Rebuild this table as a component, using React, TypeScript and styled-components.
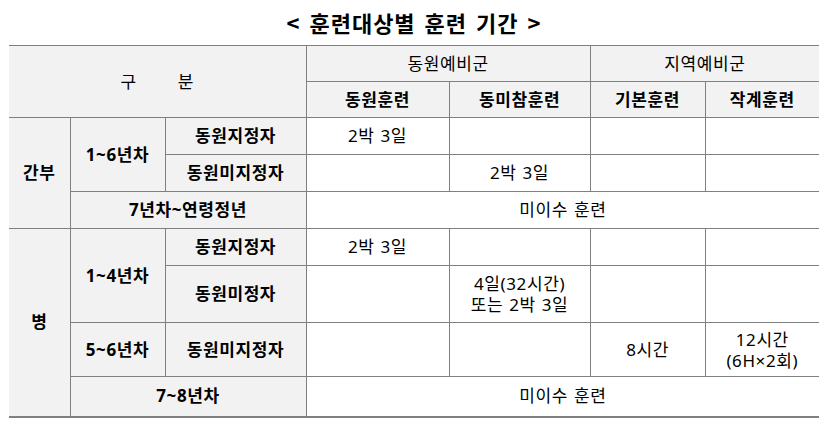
import React from "react";
import styled, { createGlobalStyle } from "styled-components";

const Global = createGlobalStyle`
  html, body { margin: 0; padding: 0; background: #fff; }
  body { font-family: "Noto Sans CJK KR", "Noto Sans", sans-serif; color: #111; }
`;

const Page = styled.div`
  width: 828px;
  padding: 0 9px;
  box-sizing: border-box;
`;

const Title = styled.h1`
  margin: 0;
  height: 45px;
  display: flex;
  align-items: center;
  justify-content: center;
  font-size: 22px;
  font-weight: 700;
  letter-spacing: 1px;
  word-spacing: 3px;
  padding-bottom: 1px;
  box-sizing: border-box;
  color: #000;
`;

const Table = styled.table`
  width: 810px;
  border-collapse: collapse;
  table-layout: fixed;
  border-top: 1px solid #808080;
  border-bottom: 2px solid #808080;
  font-family: "Noto Sans", "Noto Sans CJK KR", sans-serif;
  font-size: 17px;
  line-height: 20px;
  letter-spacing: 0.6px;
  word-spacing: 1px;
`;

const Row = styled.tr<{ $h: number }>`
  height: ${(p) => p.$h}px;
`;

const Cell = styled.td<{ $head?: boolean; $bold?: boolean; $first?: boolean; $last?: boolean }>`
  border: 1px solid #808080;
  ${(p) => (p.$first ? "border-left: none;" : "")}
  ${(p) => (p.$last ? "border-right: none;" : "")}
  background: ${(p) => (p.$head ? "#f2f2f2" : "#fff")};
  font-weight: ${(p) => (p.$bold ? 700 : 400)};
  text-align: center;
  vertical-align: middle;
  padding: 0;
  color: #000;
`;

const Line = styled.span`
  display: block;
  line-height: 21px;
`;

const Spread = styled.span`
  word-spacing: 36px;
`;

const widths = [61, 95, 141, 143, 141, 115, 114];

export default function App() {
  return (
    <Page>
      <Global />
      <Title>&lt; 훈련대상별 훈련 기간 &gt;</Title>
      <Table>
        <colgroup>
          {widths.map((w, i) => (
            <col key={i} style={{ width: w }} />
          ))}
        </colgroup>
        <tbody>
          <Row $h={36}>
            <Cell $head $first colSpan={3} rowSpan={2}>
              <Spread>구 분</Spread>
            </Cell>
            <Cell $head colSpan={2}>동원예비군</Cell>
            <Cell $head $last colSpan={2}>지역예비군</Cell>
          </Row>
          <Row $h={36}>
            <Cell $head $bold>동원훈련</Cell>
            <Cell $head $bold>동미참훈련</Cell>
            <Cell $head $bold>기본훈련</Cell>
            <Cell $head $bold $last>작계훈련</Cell>
          </Row>
          <Row $h={37}>
            <Cell $head $bold $first rowSpan={3}>간부</Cell>
            <Cell $head $bold rowSpan={2}>1~6년차</Cell>
            <Cell $head $bold>동원지정자</Cell>
            <Cell>2박 3일</Cell>
            <Cell />
            <Cell />
            <Cell $last />
          </Row>
          <Row $h={37}>
            <Cell $head $bold>동원미지정자</Cell>
            <Cell />
            <Cell>2박 3일</Cell>
            <Cell />
            <Cell $last />
          </Row>
          <Row $h={37}>
            <Cell $head $bold colSpan={2}>7년차~연령정년</Cell>
            <Cell $last colSpan={4}>미이수 훈련</Cell>
          </Row>
          <Row $h={37}>
            <Cell $head $bold $first rowSpan={4}>병</Cell>
            <Cell $head $bold rowSpan={2}>1~4년차</Cell>
            <Cell $head $bold>동원지정자</Cell>
            <Cell>2박 3일</Cell>
            <Cell />
            <Cell />
            <Cell $last />
          </Row>
          <Row $h={57}>
            <Cell $head $bold>동원미정자</Cell>
            <Cell />
            <Cell>
              <Line>4일(32시간)</Line>
              <Line>또는 2박 3일</Line>
            </Cell>
            <Cell />
            <Cell $last />
          </Row>
          <Row $h={54}>
            <Cell $head $bold>5~6년차</Cell>
            <Cell $head $bold>동원미지정자</Cell>
            <Cell />
            <Cell />
            <Cell>8시간</Cell>
            <Cell $last>
              <Line>12시간</Line>
              <Line>(6H×2회)</Line>
            </Cell>
          </Row>
          <Row $h={40}>
            <Cell $head $bold colSpan={2}>7~8년차</Cell>
            <Cell $last colSpan={4}>미이수 훈련</Cell>
          </Row>
        </tbody>
      </Table>
    </Page>
  );
}
